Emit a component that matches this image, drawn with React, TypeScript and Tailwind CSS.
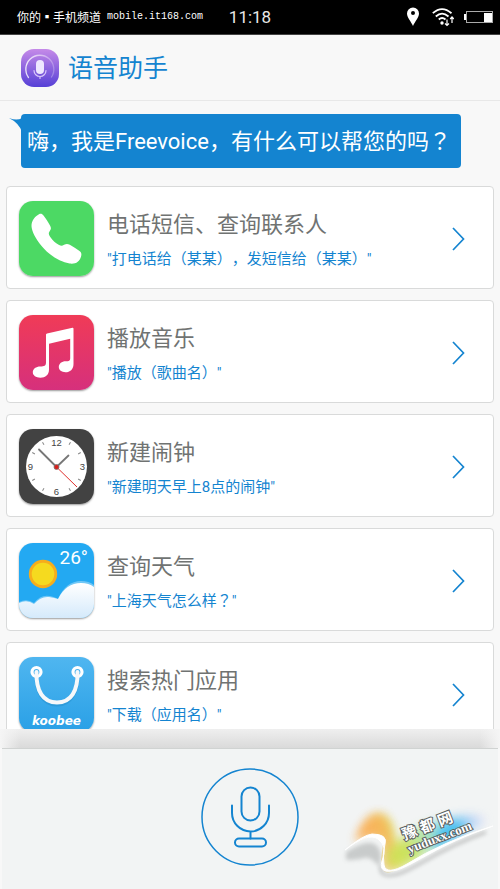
import type { ReactNode } from "react";

function PhoneIcon() {
  return (
    <svg viewBox="0 0 75 75" className="size-full" aria-hidden="true">
      <rect width="75" height="75" rx="14" fill="#4cd964" />
      <path
        d="M20 13.300c1.800-1 3.200-.4 4.500 1.200 2.600 3.200 4.700 6.800 6.500 10 1.500 2.800 1 4-.5 6-1.200 1.600-.8 3.200.6 5.200 2.700 3.900 5.600 6.600 9 8.300 2 1 3.200.8 5-.3 2-1.100 3.700-1.100 5.700 0 3.400 1.900 6.600 4 9.700 6.300 2 1.500 2.200 3 1.600 5.200-1.400 5.600-5.600 8.100-11.500 7.300-9.600-1.400-20.300-8.300-28-17.500C16.500 37.600 12.700 30.400 12.500 25c0-5.300 3.300-9.600 7.500-11.700z"
        fill="#fff"
      />
    </svg>
  );
}

function MusicIcon() {
  return (
    <svg viewBox="0 0 75 75" className="size-full" aria-hidden="true">
      <defs>
        <linearGradient id="music" x1="0" y1="0" x2="0" y2="1">
          <stop offset="0" stopColor="#f03b57" />
          <stop offset="1" stopColor="#d6307c" />
        </linearGradient>
      </defs>
      <rect width="75" height="75" rx="14" fill="url(#music)" />
      <path
        d="M27 19.500Q27 18.700 28 18.400L53.500 12.800Q54.500 12.700 54.500 13.700V49C54.500 54.500 51 57.300 46.500 57.300c-4 0-6.700-2.200-6.700-5.200 0-3.500 3-5.800 6.800-5.800 3.400 0 4.600-.6 4.600-3.300V23.800L30 28.700V54.500c0 5.400-3.500 8.200-8.600 8.200-4.500 0-7.600-2.200-7.600-5.400 0-3.500 3.200-5.800 7.500-5.800 4 0 5.700-.8 5.700-4z"
        fill="#fff"
      />
    </svg>
  );
}

function ClockIcon() {
  const ticks = [30, 60, 120, 150, 210, 240, 300, 330];
  return (
    <svg viewBox="0 0 75 75" className="size-full" aria-hidden="true">
      <rect width="75" height="75" rx="14" fill="#424242" />
      <circle cx="37.500" cy="37.500" r="30.500" fill="#fff" />
      {ticks.map((angle) => (
        <path key={angle} d="M37.500 9.500v3" stroke="#888" strokeWidth="1" transform={`rotate(${angle} 37.500 37.500)`} />
      ))}
      <g fill="#444" fontSize="9.500" textAnchor="middle" className="font-['Liberation_Sans',sans-serif]">
        <text x="37.500" y="16.500">12</text>
        <text x="63.500" y="41">3</text>
        <text x="37.500" y="66">6</text>
        <text x="11.500" y="41">9</text>
      </g>
      <path d="M37.500 38L20 20.500M37.500 38L49.500 26.500" stroke="#777" strokeWidth="1.800" strokeLinecap="round" />
      <path d="M37.500 38L58 58" stroke="#e0302c" strokeWidth="1" />
      <circle cx="37.500" cy="38" r="2.500" fill="#d9201c" stroke="#777" strokeWidth=".8" />
    </svg>
  );
}

function WeatherIcon() {
  return (
    <svg viewBox="0 0 75 75" className="size-full" aria-hidden="true">
      <defs>
        <linearGradient id="cloud" x1="0" y1="0" x2="0" y2="1">
          <stop offset="0" stopColor="#fff" />
          <stop offset="1" stopColor="#d5eafb" />
        </linearGradient>
        <clipPath id="tile"><rect width="75" height="75" rx="14" /></clipPath>
      </defs>
      <g clipPath="url(#tile)">
        <rect width="75" height="75" fill="#23a9f2" />
        <circle cx="24" cy="31" r="14.200" fill="#f6ad1c" />
        <circle cx="24" cy="31" r="11.300" fill="#f5da1f" />
        <path d="M0 59q8-4 15 1q7-9 16-7 5 1 8 3Q47 38 62 38q8 0 13 4v33H0z" fill="#fff" opacity=".35" />
        <path d="M0 60q8-4 15 1q7-8 15-7 6 1 9 2Q47 40 62 40q8 0 13 4v31H0z" fill="url(#cloud)" />
      </g>
      <text x="40.500" y="21" fontSize="19" fill="#fff" className="font-[Roboto,sans-serif]">26°</text>
    </svg>
  );
}

function StoreIcon() {
  return (
    <svg viewBox="0 0 75 75" className="size-full" aria-hidden="true">
      <defs>
        <linearGradient id="store" x1="0" y1="0" x2="0" y2="1">
          <stop offset="0" stopColor="#4fb6f0" />
          <stop offset="1" stopColor="#2aa0e6" />
        </linearGradient>
      </defs>
      <rect width="75" height="75" rx="14" fill="url(#store)" />
      <path d="M17.500 16C17 35 24 47.500 38 47.500S59 35 58.500 16" fill="none" stroke="#1d83c0" strokeWidth="4" opacity=".35" />
      <g fill="none" stroke="#fff">
        <circle cx="17.500" cy="15" r="4.500" strokeWidth="3.200" />
        <circle cx="58.500" cy="15" r="4.500" strokeWidth="3.200" />
        <path d="M17.500 15C17 34 24 45.500 38 45.500S59 34 58.500 15" stroke="#f6f8fa" strokeWidth="4" strokeLinecap="round" />
      </g>
      <text x="37.500" y="68" textAnchor="middle" fontSize="12" fontWeight="700" fontStyle="italic" fill="#fff" className="font-['DejaVu_Sans',sans-serif]">
        koobee
      </text>
    </svg>
  );
}

function AssistantLogo() {
  return (
    <svg viewBox="0 0 40 40" className="size-10" aria-hidden="true">
      <defs>
        <linearGradient id="logo" x1="0" y1="0" x2="0" y2="1">
          <stop offset="0" stopColor="#c58ae8" />
          <stop offset="1" stopColor="#5640d6" />
        </linearGradient>
        <linearGradient id="arc" x1="0" y1="0" x2="1" y2="0">
          <stop offset="0" stopColor="#fff" stopOpacity=".85" />
          <stop offset="1" stopColor="#fff" stopOpacity=".25" />
        </linearGradient>
      </defs>
      <rect x="1" y="1" width="38" height="38" rx="13" fill="url(#logo)" />
      <path d="M8.500 29.500A14 14 0 1 1 31.500 29" fill="none" stroke="url(#arc)" strokeWidth="1.300" strokeLinecap="round" />
      <rect x="16" y="12" width="8" height="14" rx="4" fill="#eee6ff" />
      <path d="M14 22.500a6 6 0 0 0 12 0M20 28.500v2" fill="none" stroke="#d9c8fa" strokeWidth="1.200" strokeLinecap="round" />
    </svg>
  );
}

function StatusIcons() {
  return (
    <div className="flex items-center justify-end">
      <svg viewBox="0 0 14 20" className="mr-3 h-5 w-3.5" aria-hidden="true">
        <path fillRule="evenodd" d="M7 .500a6 6 0 0 0-6 6c0 4 4 8 6 12.500 2-4.500 6-8.500 6-12.500a6 6 0 0 0-6-6zm0 3.500a2 2 0 1 1 0 4 2 2 0 0 1 0-4z" fill="#fff" />
      </svg>
      <svg viewBox="0 0 22 20" className="mr-2.5 h-5 w-[22px]" aria-hidden="true">
        <g fill="none" stroke="#fff" strokeWidth="1.800">
          <path d="M.8 6.200Q10 -2 19.500 6.200M3.800 9.500Q10 3.800 16.500 9.500M6.800 12.500Q10 9.500 13.500 12.500" />
        </g>
        <circle cx="10" cy="16" r="1.700" fill="#fff" />
        <path d="M15 12.500v6m-2-2 2 2 2-2M20 16v-6m-1.800 2 1.800-2 1.800 2" fill="none" stroke="#fff" strokeWidth="1.200" />
      </svg>
      <svg viewBox="0 0 30 14" className="mr-1.5 h-3.5 w-[30px]" aria-hidden="true">
        <rect x="2.500" y="1.500" width="26" height="11" fill="none" stroke="#aaa" />
        <path d="M0 4h2v6H0z" fill="#fff" />
        <path d="M20 3h8v9h-8z" fill="#fff" />
      </svg>
    </div>
  );
}

function SiteMark() {
  return (
    <svg viewBox="0 0 170 99" className="absolute -right-0.5 bottom-0 h-[99px] w-[170px]" aria-hidden="true">
      <defs>
        <filter id="glow" x="-40%" y="-40%" width="180%" height="180%"><feGaussianBlur stdDeviation="5" /></filter>
        <filter id="soft" x="-20%" y="-40%" width="140%" height="180%"><feGaussianBlur stdDeviation="2" /></filter>
        <linearGradient id="rainbow" gradientUnits="userSpaceOnUse" x1="45" y1="60" x2="155" y2="25">
          <stop offset="0" stopColor="#fab863" />
          <stop offset=".18" stopColor="#dfe25a" />
          <stop offset=".38" stopColor="#b5e58a" />
          <stop offset=".62" stopColor="#7fd6f0" />
          <stop offset=".82" stopColor="#8fc8f5" />
          <stop offset="1" stopColor="#eee4f6" />
        </linearGradient>
        <clipPath id="aboveRibbon"><path d="M0 0H170V34Q140 40 105 60T58 83Q48 82 52 62T42 46T15 59L0 65z" /></clipPath>
      </defs>
      <path d="M16 62Q38 48 46 55T49 76Q40 66 34 68T16 70z" fill="#8b8f8f" opacity=".4" filter="url(#soft)" />
      <g clipPath="url(#aboveRibbon)">
        <path d="M24 52Q36 22 50 24T66 52Q95 30 128 26T153 35Q125 43 95 64T57 81Q48 78 53 62T42 47z" fill="url(#rainbow)" opacity=".85" filter="url(#glow)" />
        <path d="M28 46Q38 22 50 24T62 60L54 66Q54 45 42 45z" fill="#f9a94d" opacity=".65" filter="url(#glow)" />
        <path d="M103 52Q115 28 129 33T128 45L105 60z" fill="#2cb6ee" opacity=".75" filter="url(#glow)" />
        <path d="M56 60L80 52L90 64L60 79z" fill="#c3e04a" opacity=".6" filter="url(#glow)" />
      </g>
      <path d="M50 72Q47 86 67 81C88 74 105 57 155 39" fill="none" stroke="#666" strokeWidth="2.500" opacity=".45" transform="translate(1 3)" filter="url(#soft)" />
      <path d="M15 60Q38 42 48 49T52 71Q48 85 67 80C88 73 105 56 163 36Q112 52 77 74Q56 86 54 75T55 54T42 44Q33 45 15 60z" fill="#fff" stroke="#fff" strokeWidth="1" />
      <g transform="rotate(-21 80 45)" fill="#fff" stroke="#5a6160" strokeWidth="2" paintOrder="stroke" fontWeight="700">
        <text x="73" y="48" fontSize="15" className="font-['Noto_Sans_CJK_SC',sans-serif]">
          <tspan>豫</tspan><tspan dx="4">都</tspan><tspan dx="4">网</tspan>
        </text>
        <text x="73" y="62" fontSize="13" className="font-['Liberation_Serif',serif]">yuduxx.com</text>
      </g>
    </svg>
  );
}

// The Japanese face centres the full-width question mark in its cell.
function QuestionMark() {
  return <span className="font-['Noto_Sans_CJK_JP',sans-serif] leading-none">？</span>;
}

const commands: { title: string; hint: ReactNode; icon: ReactNode }[] = [
  { title: "电话短信、查询联系人", hint: "打电话给（某某），发短信给（某某）", icon: <PhoneIcon /> },
  { title: "播放音乐", hint: "播放（歌曲名）", icon: <MusicIcon /> },
  { title: "新建闹钟", hint: "新建明天早上8点的闹钟", icon: <ClockIcon /> },
  { title: "查询天气", hint: <>上海天气怎么样<QuestionMark /></>, icon: <WeatherIcon /> },
  { title: "搜索热门应用", hint: "下载（应用名）", icon: <StoreIcon /> },
];

export default function App() {
  return (
    <div className="flex h-screen flex-col overflow-hidden bg-[#f8f8f8] font-[Roboto,'Noto_Sans_CJK_SC',sans-serif] [text-spacing-trim:space-all]">
      <div className="grid h-[35px] shrink-0 grid-cols-[1fr_auto_1fr] items-center border-b border-[#444] bg-black text-white">
        <p className="flex items-center gap-1.5 pl-[17px] text-xs whitespace-nowrap">
          <span className="font-['Noto_Sans_CJK_SC',sans-serif]">你的<span className="inline-block w-3 text-center">▪</span>手机频道</span>
          <span className="font-['Liberation_Mono',monospace] text-[10px]">mobile.it168.com</span>
        </p>
        <time className="pt-0.5 text-[17px] text-[#e8e8e8]">11:18</time>
        <StatusIcons />
      </div>

      <header className="flex h-[66px] shrink-0 items-center gap-2 border-b border-[#e8e8e8] pl-5">
        <AssistantLogo />
        <h1 className="pt-0.5 text-[25px] text-[#1484d0]">语音助手</h1>
      </header>

      <main className="min-h-0 flex-1 overflow-hidden">
        <div className="relative mt-[13px] ml-[21px] w-fit rounded-sm bg-[#1484d0] pt-3 pr-2.5 pb-2.5 pl-1.5 text-[22px] leading-8 whitespace-nowrap text-white">
          嗨，我是Freevoice，有什么可以帮您的吗<QuestionMark />
          <svg viewBox="0 0 13 14" className="absolute top-1 -left-3 h-3.5 w-[13px]" aria-hidden="true">
            <path d="M0 0Q8 3 13 0V14Q10 5 0 0z" fill="#1484d0" />
          </svg>
        </div>

        <ul className="mx-1.5 mt-[18px] flex flex-col gap-[11px]">
          {commands.map(({ title, hint, icon }) => (
            <li key={title}>
              <button type="button" className="flex w-full items-center gap-3 rounded border border-[#d9dada] bg-white pt-3.5 pr-7 pb-3 pl-3 text-left">
                <span className="size-[75px] shrink-0 rounded-[14px] shadow-[0_1px_2px_rgba(0,0,0,0.4)]">{icon}</span>
                <span className="flex min-w-0 flex-1 flex-col pl-px">
                  <span className="text-[22px] leading-[40px] text-[#707372]">{title}</span>
                  <span className="text-[15px] leading-[28px] text-[#1484d0]">"{hint}"</span>
                </span>
                <svg viewBox="0 0 13 24" className="h-6 w-[13px] shrink-0" aria-hidden="true">
                  <path d="M1 1l10.500 11L1 23" fill="none" stroke="#1484d0" strokeWidth="1.700" />
                </svg>
              </button>
            </li>
          ))}
        </ul>
      </main>

      <div className="flex h-[19px] shrink-0 bg-linear-to-b from-[#efefef] to-[#dadada]">
        <div className="w-5 bg-linear-to-r from-[#f5f5f5] to-transparent" />
        <div className="flex-1" />
        <div className="w-5 bg-linear-to-l from-[#f5f5f5] to-transparent" />
      </div>

      <footer className="relative mx-0.5 flex h-[141px] shrink-0 items-start justify-center border-t border-[#d0d3d2] bg-[#f2f4f4] pt-[18px]">
        <button type="button" aria-label="语音输入" className="size-[100px] rounded-full">
          <svg viewBox="0 0 100 100" className="size-full" fill="none" stroke="#1484d0" aria-hidden="true">
            <circle cx="50" cy="50" r="48" strokeWidth="1.500" />
            <g strokeWidth="2">
              <rect x="41.500" y="20.500" width="18" height="33" rx="9" />
              <path d="M32 38.500V46a18.500 18.500 0 0 0 37 0v-7.500M50.500 64.500v7" strokeLinecap="round" />
              <rect x="35" y="71.500" width="31" height="8" rx="4" />
            </g>
          </svg>
        </button>
        <SiteMark />
      </footer>
    </div>
  );
}
